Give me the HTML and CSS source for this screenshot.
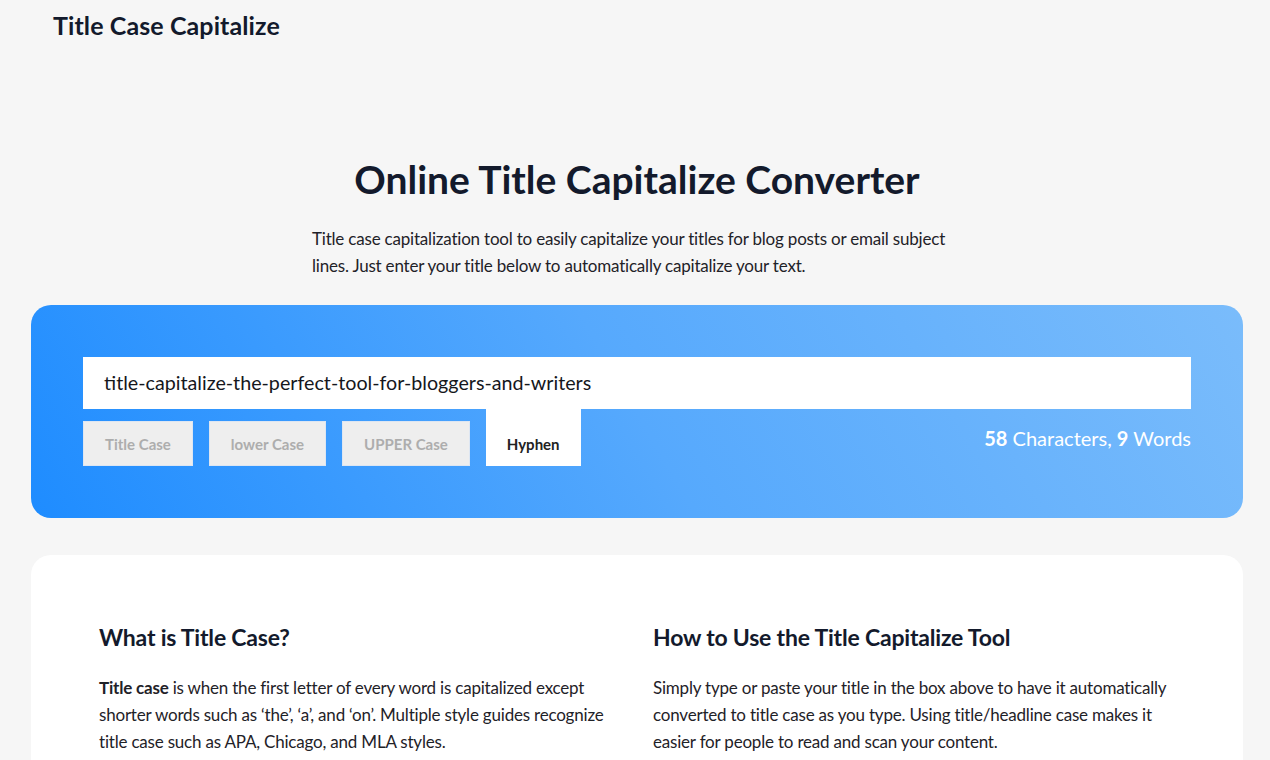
FILE: index.html
```html
<!DOCTYPE html>
<html lang="en">
<head>
<meta charset="utf-8">
<title>Title Case Capitalize</title>
<link rel="stylesheet" href="styles.css">
</head>
<body>
<header class="site-header">
  <a class="brand" href="#">Title Case Capitalize</a>
</header>
<main class="wrap">
  <section class="hero">
    <h1 class="hero-title">Online Title Capitalize Converter</h1>
    <p class="hero-lead">Title case capitalization tool to easily capitalize your titles for blog posts or email subject lines. Just enter your title below to automatically capitalize your text.</p>
  </section>
  <section class="tool">
    <div class="tool-input">title-capitalize-the-perfect-tool-for-bloggers-and-writers</div>
    <div class="tool-bar">
      <div class="modes">
        <button class="mode">Title Case</button>
        <button class="mode">lower Case</button>
        <button class="mode">UPPER Case</button>
        <button class="mode active">Hyphen</button>
      </div>
      <div class="count"><b>58</b> Characters, <b>9</b> Words</div>
    </div>
  </section>
  <section class="info">
    <div class="info-col">
      <h2>What is Title Case?</h2>
      <p><b>Title case</b> is when the first letter of every word is capitalized except shorter words such as ‘the’, ‘a’, and ‘on’. Multiple style guides recognize title case such as APA, Chicago, and MLA styles.</p>
    </div>
    <div class="info-col">
      <h2>How to Use the Title Capitalize Tool</h2>
      <p>Simply type or paste your title in the box above to have it automatically converted to title case as you type. Using title/headline case makes it easier for people to read and scan your content.</p>
    </div>
  </section>
</main>
</body>
</html>
```
FILE: styles.css
```css
* { box-sizing: border-box; }
html, body { margin: 0; padding: 0; }
body {
  background: #f6f6f6;
  font-family: "Lato", "Noto Sans", sans-serif;
  color: #1c1f26;
  overflow: hidden;
  height: 760px;
}
.site-header {
  padding: 10px 53px 0;
  height: 60px;
}
.brand {
  font-size: 25px;
  letter-spacing: 0.1px;
  font-weight: 700;
  color: #131a2c;
  text-decoration: none;
  line-height: 30px;
}
.wrap {
  width: 1212px;
  margin-left: 31px;
}
.hero {
  text-align: center;
  padding-top: 94px;
}
.hero-title {
  margin: 0;
  font-size: 39px;
  line-height: 50px;
  font-weight: 700;
  color: #131a2c;
}
.hero-lead {
  max-width: 650px;
  margin: 21px auto 0;
  text-align: left;
  font-size: 17px;
  letter-spacing: -0.2px;
  line-height: 27px;
  color: #1f2228;
}
.tool {
  margin-top: 26px;
  border-radius: 20px;
  padding: 52px;
  background: linear-gradient(60deg, #1e8cff 0%, #56a9fd 50%, #7abcfb 100%);
}
.tool-input {
  height: 52px;
  background: #fff;
  padding: 0 21px;
  font-size: 19.7px;
  line-height: 52px;
  color: #15171c;
}
.tool-bar {
  display: flex;
  justify-content: space-between;
  align-items: flex-start;
}
.modes {
  display: flex;
  gap: 16px;
  align-items: flex-end;
}
.mode {
  height: 45px;
  margin-top: 12px;
  padding: 0 21px;
  border: 1px solid #dde6f2;
  background: #eeeeee;
  color: #adadad;
  font-family: inherit;
  font-size: 15px;
  font-weight: 700;
}
.mode.active {
  height: 57px;
  margin-top: 0;
  padding-top: 12px;
  border: 0;
  background: #fff;
  color: #222;
}
.count {
  margin-top: 17px;
  font-size: 20px;
  color: #fff;
}
.count b { font-weight: 700; }
.info {
  margin-top: 37px;
  background: #fff;
  border-radius: 20px;
  padding: 66px 68px 60px;
  display: grid;
  grid-template-columns: 1fr 1fr;
  column-gap: 32px;
}
.info h2 {
  margin: 0;
  font-size: 23px;
  letter-spacing: -0.2px;
  line-height: 32px;
  color: #131a2c;
}
.info p {
  margin: 21px 0 0;
  font-size: 17px;
  letter-spacing: -0.2px;
  line-height: 27px;
  color: #1f2228;
}
```
